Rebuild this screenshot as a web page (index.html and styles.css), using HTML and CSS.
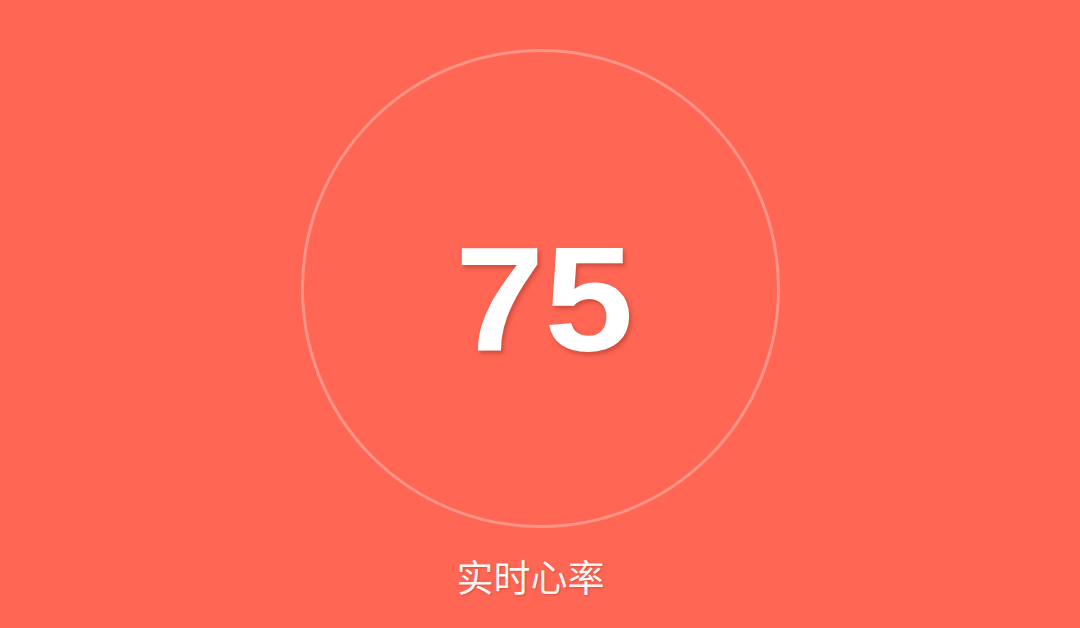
FILE: index.html
```html
<!DOCTYPE html>
<html lang="zh">
<head>
<meta charset="utf-8">
<link rel="stylesheet" href="styles.css">
</head>
<body>
<main class="screen">
  <div class="ring">
    <span class="value">75</span>
  </div>
  <div class="label">实时心率</div>
</main>
</body>
</html>
```

FILE: styles.css
```css
html, body {
  margin: 0;
  padding: 0;
  background: #ff6654;
}
.screen {
  width: 1080px;
  height: 628px;
  display: flex;
  flex-direction: column;
  align-items: center;
  padding-top: 49px;
  box-sizing: border-box;
}
.ring {
  width: 479px;
  height: 479px;
  box-sizing: border-box;
  border: 3px solid rgba(255, 255, 255, 0.3);
  border-radius: 50%;
  display: flex;
  align-items: center;
  justify-content: center;
}
.value {
  font-family: "Liberation Sans", Arial, sans-serif;
  font-weight: bold;
  font-size: 148px;
  line-height: 1;
  color: #ffffff;
  text-shadow: 2px 3px 4px rgba(120, 30, 20, 0.35);
  transform: scaleX(1.085);
  margin-top: 22px;
  margin-left: 9px;
}
.label {
  margin-top: 24px;
  margin-right: 19px;
  font-family: "Noto Sans CJK SC", sans-serif;
  font-size: 37px;
  line-height: 48px;
  color: rgba(255, 255, 255, 0.95);
  text-shadow: 1px 1px 2px rgba(120, 30, 20, 0.3);
}
```
